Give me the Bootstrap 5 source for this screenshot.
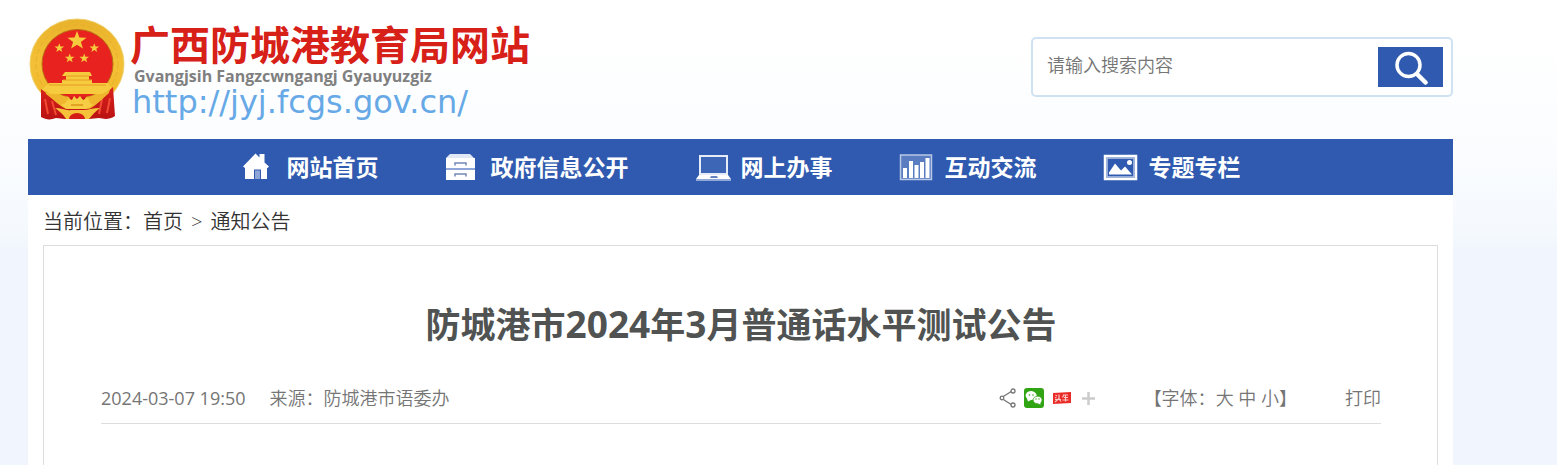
<!DOCTYPE html>
<html lang="zh-CN">
<head>
<meta charset="utf-8">
<meta name="viewport" content="width=device-width, initial-scale=1">
<title>防城港市2024年3月普通话水平测试公告</title>
<link rel="stylesheet" href="https://cdn.jsdelivr.net/npm/bootstrap@5.3.0/dist/css/bootstrap.min.css">
<style>
  body {
    font-family: "Open Sans", "Noto Sans CJK SC", sans-serif;
    background: #f0f5fe linear-gradient(#fff 0, #fff 40px, #fafcff 160px, #f4f9fd 234px, #f1f6fe 250px, #f0f5fe 300px) no-repeat;
    min-height: 100vh;
  }
  a { color: inherit; text-decoration: none; }
  .site-page { padding-left: 28px; padding-right: 104px; }
  .site-head { min-height: 139px; }
  .brand-gap { gap: 3px; padding-top: 17px; }
  .brand-name { font-size: 40px; line-height: 46px; color: #d62018; font-weight: 700; }
  .brand-latin { font-size: 16px; line-height: 16px; color: #808080; font-weight: 700; padding-left: 4px; }
  .brand-url { font-family: "DejaVu Sans", sans-serif; font-size: 32px; line-height: 36px; color: #66a9e6; padding-left: 2px; }
  .brand-text { margin-top: 5px; }
  .search-box { width: 422px; height: 60px; margin-top: 37px; border: 2px solid #cfe2f3; border-radius: 5px; background: #fff; padding: 0 8px 0 14px; }
  .search-box input { font-size: 18px; border: 0; outline: 0; padding: 0 0 3px; background: transparent; color: #555; font-weight: 350; }
  .search-box input::placeholder { color: #757575; opacity: 1; }
  .search-btn { width: 65px; height: 40px; background: #2f5aaf; border: 0; }
  .main-nav { background: #2f5aaf; min-height: 56px; gap: 66px; }
  .main-nav a { color: #fff; font-size: 23px; line-height: 56px; font-weight: 700; gap: 10px; }
  .crumbs { font-size: 20px; line-height: 46px; padding-top: 4px; color: #333; font-weight: 350; gap: 8px; }
  .content-area { padding: 0 15px; min-height: calc(100vh - 195px); }
  .article-box { border: 1px solid #ddd; border-bottom: 0; padding: 53px 56px 0 57px; min-height: calc(100vh - 245px); }
  .article-title { font-size: 35px; line-height: 50px; color: #505352; font-weight: 700; margin-bottom: 23px; }
  .article-title .num { font-size: 37px; }
  .article-meta { font-size: 18px; line-height: 50px; color: #757575; font-weight: 350; border-bottom: 1px solid #ddd; }
  .article-meta time { font-weight: 400; }
</style>
</head>
<body>
<div class="site-page">
  <header class="site-head d-flex justify-content-between align-items-start">
    <a href="#" class="d-flex align-items-start brand-gap">
      <svg width="99" height="104" viewBox="28 16 99 104" aria-hidden="true">
        <defs>
          <linearGradient id="gold" x1="0" y1="0" x2="0" y2="1"><stop offset="0" stop-color="#e9b22c"/><stop offset=".5" stop-color="#f4c136"/><stop offset="1" stop-color="#eeb328"/></linearGradient>
          <linearGradient id="drape" x1="0" y1="0" x2="0" y2="1"><stop offset="0" stop-color="#d9211b"/><stop offset="1" stop-color="#b91212"/></linearGradient>
        </defs>
        <ellipse cx="77" cy="63" rx="47" ry="45" fill="url(#gold)" stroke="#efd06a"/>
        <ellipse cx="77" cy="63" rx="41" ry="39" fill="none" stroke="#e6b02c" stroke-dasharray="5 3"/>
        <ellipse cx="77.500" cy="63" rx="35.500" ry="34.500" fill="#e8231f" stroke="#b96d14"/>
        <g fill="#f6cb3d">
          <path id="star" d="M77 30l2.400 6.500 7.100.2-5.600 4.200 2 6.700-5.900-3.900-5.900 3.900 2-6.700-5.600-4.200 7.100-.2z"/>
          <use href="#star" transform="translate(20.800 27.200) scale(.5)"/>
          <use href="#star" transform="translate(55.800 27.200) scale(.5)"/>
          <use href="#star" transform="translate(31.200 37.500) scale(.5)"/>
          <use href="#star" transform="translate(45.700 37.500) scale(.5)"/>
          <path d="M65 71h25l2 4h-3v4h3v3h16l5 7-4 4H46l-5-4 8-7h13v-3h4v-4h-4z"/>
        </g>
        <path d="M66 75h23M63 79h29M49 84h57" stroke="#e69b24" fill="none"/>
        <path d="M41 88c8 7 16 8 25 8h22c9 0 17-2 25-10l2 29c-6 4-11 3-16 2l-10 1H65l-9-1c-5 2-10 2-15-1z" fill="url(#drape)"/>
        <path d="M45 98l3 15m4-13l4 14m54-17l-3 15m-5-14l-3 15" stroke="#f04a35" stroke-width="2"/>
        <path d="M45 89c8 8 17 5 24 7l5 8-8 4c-8-4-12-9-20-15zM110 88c-8 8-16 6-24 8l-5 8 8 4c8-4 13-10 20-16z" fill="#efb52d"/>
        <path d="M68 98l4 1 2-4 3 3 3-3 3 4 5-2 2 5 3 2-6 4H67l-6-4 4-2z" fill="#f7cd43"/>
        <path d="M55 107c7 0 11 3 16 2h12c5 0 10-2 17-2-5 4-8 7-11 11H66c-3-5-7-8-11-11z" fill="#f5c23a"/>
        <path d="M69 118a8 6 0 0 1 16 0z" fill="#d51d18"/><path d="M71 104h12" stroke="#e2a224" stroke-width="2"/>
      </svg>
      <span class="brand-text d-flex flex-column">
        <span class="brand-name">广西防城港教育局网站</span>
        <span class="brand-latin">Gvangjsih Fangzcwngangj Gyauyuzgiz</span>
        <span class="brand-url">http://jyj.fcgs.gov.cn/</span>
      </span>
    </a>
    <form class="search-box d-flex align-items-center">
      <input type="text" class="flex-grow-1" placeholder="请输入搜索内容" aria-label="请输入搜索内容">
      <button type="button" class="search-btn p-0 d-flex align-items-center justify-content-center" aria-label="搜索">
        <svg width="36" height="36" viewBox="0 0 36 36" fill="none" stroke="#fff"><circle cx="15.500" cy="16" r="11.500" stroke-width="3.500"/><path d="M24 25l8.500 8.500" stroke-width="4.500" stroke-linecap="round"/></svg>
      </button>
    </form>
  </header>

  <nav class="main-nav d-flex justify-content-center align-items-center" aria-label="主导航">
    <a href="#" class="d-flex align-items-center">
      <svg width="36" height="30" viewBox="0 0 36 30"><path d="M2 14.500L14.500 1.500l4 4V2h5v8.500l4.500 4-1.500 1.500H26V27h-6v-9.500h-7V27H4V16z" fill="#fff"/><path d="M14 18.500h5V27h-5z" fill="#8ea6d6"/></svg>
      <span>网站首页</span></a>
    <a href="#" class="d-flex align-items-center">
      <svg width="36" height="30" viewBox="0 0 36 30"><path d="M5 2h20l4 4H1z" fill="#e0e7f5"/><path d="M1 6h29v10H1zm0 12h29v10H1z" fill="#fff"/><path d="M1 16h29v2H1z" fill="#8ea7d8"/><path d="M10 13.500V11h11v2.500M10 24.500V22h11v2.500" fill="none" stroke="#7188b8" stroke-width="1.500"/></svg>
      <span>政府信息公开</span></a>
    <a href="#" class="d-flex align-items-center">
      <svg width="36" height="30" viewBox="0 0 36 30"><path d="M5 4h27v18H5z" fill="#3d66b6" stroke="#e5ebf7" stroke-width="2"/><path d="M4 23h29l3 4H1z" fill="#fff"/><path d="M1 27h35v2H1z" fill="#8fa8d8"/><path d="M16 24h6l1 2h-8z" fill="#6584c3"/></svg>
      <span>网上办事</span></a>
    <a href="#" class="d-flex align-items-center">
      <svg width="36" height="30" viewBox="0 0 36 30"><path d="M1.500 3h31v24.500h-31z" fill="#5a7cc1" stroke="#b8c7e5" stroke-width="1.500"/><path d="M4 16h4v10H4zm6-7h4v17h-4zm5.500 4h4v13h-4zm5.500-3h4v16h-4zm5.500-4h4v20h-4z" fill="#fff"/></svg>
      <span>互动交流</span></a>
    <a href="#" class="d-flex align-items-center">
      <svg width="36" height="30" viewBox="0 0 36 30"><path d="M2 4h31v23H2z" fill="none" stroke="#fff" stroke-width="2.500"/><path d="M4 6h27v19H4z" fill="none" stroke="#b8c7e6" stroke-width="1.500"/><path d="M6 22.500v-2l6-9 6 7 4-4 7 8z" fill="#fff"/><circle cx="26.500" cy="10.500" r="2.500" fill="#fff"/></svg>
      <span>专题专栏</span></a>
  </nav>

  <main class="content-area bg-white">
    <div class="crumbs d-flex" role="navigation" aria-label="当前位置"><span>当前位置：<a href="#">首页</a></span><span>&gt;</span><a href="#">通知公告</a></div>
    <article class="article-box">
      <h1 class="article-title text-center">防城港市<span class="num">2024</span>年<span class="num">3</span>月普通话水平测试公告</h1>
      <div class="article-meta d-flex align-items-center justify-content-between">
        <div class="d-flex gap-4"><time>2024-03-07 19:50</time><span>来源：防城港市语委办</span></div>
        <div class="d-flex align-items-center gap-5">
          <div class="d-flex align-items-center gap-2">
            <a href="#" class="d-flex" aria-label="分享"><svg width="18" height="20" viewBox="0 0 18 20" fill="none" stroke="#777" stroke-width="1.300"><path d="M14 3L3 10l11 7"/><g fill="#fff"><circle cx="15" cy="3" r="2"/><circle cx="4" cy="10" r="1.800"/><circle cx="15" cy="17" r="2"/></g></svg></a>
            <a href="#" class="d-flex" aria-label="微信"><svg width="20" height="20" viewBox="0 0 20 20"><rect width="20" height="20" rx="3" fill="#31a414"/><path d="M3 10.500a5.500 4.500 0 1 1 4 1.500l-3 1.500z" fill="#fff"/><path d="M17 14.500a4.500 3.800 0 1 0-3 1.300l2.500 1.200z" fill="#fff" stroke="#31a414" stroke-width=".7"/><g fill="#31a414"><circle cx="5.500" cy="7" r=".8"/><circle cx="9" cy="7" r=".8"/><circle cx="12" cy="11" r=".7"/><circle cx="15" cy="11" r=".7"/></g></svg></a>
            <a href="#" class="d-flex" aria-label="头条"><svg width="20" height="20" viewBox="0 0 20 20"><path d="M1 5l18-1v11L1 16z" fill="#e92c27"/><g fill="none" stroke="#fbc9c6" stroke-width="1.200"><path d="M3.500 7l1.500 1M3 9.500l1.500.5M3 11.500h6M7 6.500v4l-4 3.500M7 11l2 2.500M11 7h5M12 9.500h4M10.500 12h6M13.500 7v6.500M11.500 7.500l-1 2"/></g></svg></a>
            <a href="#" class="d-flex" aria-label="更多"><svg width="16" height="20" viewBox="0 0 16 20"><path d="M8.500 4v13M2 10.500h13" stroke="#ccc" stroke-width="2.500"/></svg></a>
          </div>
          <div>【字体：<a href="#">大</a> <a href="#">中</a> <a href="#">小</a>】</div>
          <a href="#">打印</a>
        </div>
      </div>
    </article>
  </main>
</div>
<script src="https://cdn.jsdelivr.net/npm/bootstrap@5.3.0/dist/js/bootstrap.bundle.min.js"></script>
</body>
</html>
